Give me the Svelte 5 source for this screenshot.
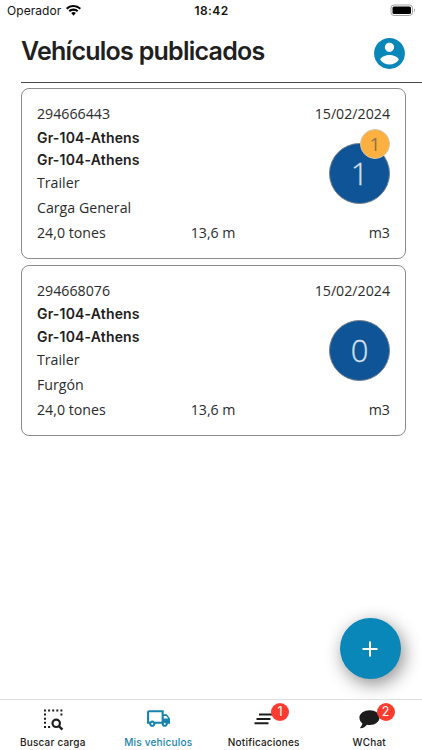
<script>
  const vehicles = [
    { id: '294666443', date: '15/02/2024', from: 'Gr-104-Athens', to: 'Gr-104-Athens', type: 'Trailer', load: 'Carga General', weight: '24,0 tones', length: '13,6 m', volume: 'm3', matches: 1, fresh: 1 },
    { id: '294668076', date: '15/02/2024', from: 'Gr-104-Athens', to: 'Gr-104-Athens', type: 'Trailer', load: 'Furgón', weight: '24,0 tones', length: '13,6 m', volume: 'm3', matches: 0, fresh: 0 }
  ];
</script>

<div class="screen">
  <div class="status">
    <div class="carrier">
      <span>Operador</span>
      <svg width="15" height="11" viewBox="0 0 15 11">
        <path d="M7.5 0C4.6 0 2 1.1 0 3l1.4 1.5A8.8 8.8 0 0 1 7.5 2.1c2.4 0 4.5.9 6.1 2.4L15 3A10.9 10.9 0 0 0 7.5 0z" />
        <path d="M7.5 3.500c-1.900 0-3.600.7-4.900 1.900L4 7.100a5.100 5.100 0 0 1 7 0l1.400-1.700a7.200 7.200 0 0 0-4.900-1.900z" />
        <path d="M7.5 7.100c-.9 0-1.700.3-2.300.9l2.300 2.700 2.300-2.700c-.6-.6-1.400-.9-2.300-.9z" />
      </svg>
    </div>
    <span class="clock">18:42</span>
    <svg class="battery" width="26" height="13" viewBox="0 0 26 13">
      <rect x="1" y="1" width="21.500" height="10.500" rx="3" fill="none" stroke="#a3a3a3" />
      <rect x="2.500" y="2.500" width="18.500" height="7.500" rx="1.500" />
      <path d="M24 4.500c1.200.5 1.200 3 0 3.500z" fill="#a3a3a3" />
    </svg>
  </div>

  <header>
    <h1>Vehículos publicados</h1>
    <svg class="avatar" width="37" height="37" viewBox="0 0 24 24">
      <path fill="#0a87b9" d="M12 2C6.480 2 2 6.480 2 12s4.480 10 10 10 10-4.480 10-10S17.520 2 12 2zm0 3c1.660 0 3 1.340 3 3s-1.340 3-3 3-3-1.340-3-3 1.340-3 3-3zm0 14.200c-2.500 0-4.710-1.280-6-3.220.03-1.990 4-3.080 6-3.080 1.990 0 5.970 1.090 6 3.080-1.290 1.940-3.500 3.220-6 3.220z" />
    </svg>
  </header>

  <main>
    {#each vehicles as v}
      <article>
        <div class="row"><span>{v.id}</span><span>{v.date}</span></div>
        <div class="place">{v.from}</div>
        <div class="place">{v.to}</div>
        <div class="row">{v.type}</div>
        <div class="row">{v.load}</div>
        <div class="row specs"><span>{v.weight}</span><span>{v.length}</span><span>{v.volume}</span></div>
        <div class="count">
          {v.matches}
          {#if v.fresh}<span class="fresh">{v.fresh}</span>{/if}
        </div>
      </article>
    {/each}
  </main>

  <button class="add" aria-label="Añadir">
    <svg width="16" height="16" viewBox="0 0 16 16"><path d="M8 .5v15M.5 8h15" stroke="#fff" stroke-width="2" /></svg>
  </button>

  <nav>
    <div class="tab search">
      <svg width="21" height="22" viewBox="0 0 21 22">
        <g fill="none" stroke="#1c1c1c" stroke-width="2">
          <path d="M1 1.500h19" stroke-dasharray="2 2.100" />
          <path d="M1 5.600h2M1 9.700h2M1 13.800h2M1 17.900h2M5.100 17.900h2M17.400 5.600h2" />
          <circle cx="13.200" cy="14.300" r="3.700" stroke-width="2.200" />
          <path d="M15.800 17l3.600 3.600" stroke-width="2.400" />
        </g>
      </svg>
      <span class="label">Buscar carga</span>
    </div>
    <div class="tab truck">
      <svg width="25" height="25" viewBox="0 0 24 24">
        <path fill="#1583ad" d="M20 8h-3V4H3c-1.100 0-2 .9-2 2v11h2c0 1.660 1.340 3 3 3s3-1.340 3-3h6c0 1.660 1.340 3 3 3s3-1.340 3-3h2v-5l-3-4zm-.5 1.500l1.960 2.500H17V9.500h2.500zM6 18c-.55 0-1-.45-1-1s.45-1 1-1 1 .45 1 1-.45 1-1 1zm2.220-3c-.55-.61-1.330-1-2.220-1s-1.670.39-2.220 1H3V6h12v9H8.220zM18 18c-.55 0-1-.45-1-1s.45-1 1-1 1 .45 1 1-.45 1-1 1z" />
      </svg>
      <span class="label">Mis vehiculos</span>
    </div>
    <div class="tab notices">
      <svg width="20" height="12" viewBox="0 0 20 12">
        <path d="M5 1.500h14M2.500 6h14M.5 10.300h14" stroke="#1c1c1c" stroke-width="2.100" />
      </svg>
      <i class="badge">1</i>
      <span class="label">Notificaciones</span>
    </div>
    <div class="tab chat">
      <svg width="21" height="19" viewBox="0 0 21 19">
        <path fill="#1c1c1c" d="M10.800.3c5.400 0 9.700 3.100 9.700 7.300s-4.300 7.500-9.700 7.500c-1 0-2-.1-2.900-.3-1.500 2-3.700 3.300-6.200 3.500-.5 0-.8-.5-.4-.9 1.100-1 1.900-2.300 2.100-3.800C1.700 12.200.4 10 .4 7.600.4 3.400 5.200.3 10.800.3z" />
      </svg>
      <i class="badge">2</i>
      <span class="label">WChat</span>
    </div>
  </nav>
</div>

<style>
  :global(body) { background: #fff; }
  .screen {
    position: relative;
    box-sizing: border-box;
    width: 422px;
    height: 750px;
    overflow: hidden;
    display: flex;
    flex-direction: column;
    background: #fff;
    color: #2b2b2b;
    font-family: "Open Sans", sans-serif;
  }
  .status {
    height: 22px;
    flex: none;
    display: grid;
    grid-template-columns: 1fr auto 1fr;
    align-items: center;
    padding: 0 6px 0 7px;
    color: #111;
    font: 12px/22px Inter, sans-serif;
  }
  .carrier { display: flex; align-items: center; gap: 5px; letter-spacing: 0.060px; }
  .carrier svg { margin-top: -1px; }
  .clock { font-weight: 600; letter-spacing: 0.400px; }
  .battery { justify-self: end; margin-top: -1px; }
  header {
    flex: none;
    box-sizing: border-box;
    height: 61px;
    margin-left: 21px;
    padding: 0 14.500px 0 0;
    border-bottom: 1px solid #4a4a4c;
    display: flex;
    justify-content: space-between;
    align-items: center;
  }
  h1 {
    margin: -2px 0 0;
    font: 600 25px/34px Inter, sans-serif;
    letter-spacing: -0.740px;
    color: #202020;
  }
  .avatar { margin-top: 3px; }
  main { flex: 1; padding: 5px 16px 0 21px; }
  article {
    position: relative;
    box-sizing: border-box;
    height: 171px;
    margin-bottom: 5.500px;
    padding: 13px 15px 0;
    border: 1px solid #8b8b8b;
    border-radius: 8px;
    font-size: 14.200px;
  }
  .row { display: flex; justify-content: space-between; height: 24.900px; line-height: 24.900px; }
  .specs { display: grid; grid-template-columns: 1fr 1fr 1fr; }
  .specs span:nth-child(2) { padding-left: 36px; }
  .specs span:last-child { text-align: right; }
  .place { height: 22.300px; font: 600 14px/22.300px Inter, sans-serif; letter-spacing: 0.170px; color: #202020; }
  .count {
    position: absolute;
    right: 15px;
    top: 54px;
    box-sizing: border-box;
    width: 61px;
    height: 61px;
    border: 1px solid #75818e;
    border-radius: 50%;
    background: #0e5496;
    color: #d5e1ed;
    font: 300 31px/58px "Open Sans", sans-serif;
    -webkit-text-stroke: 0.300px #d5e1ed;
    text-align: center;
  }
  .fresh {
    position: absolute;
    right: -1px;
    top: -15px;
    box-sizing: border-box;
    width: 30px;
    height: 30px;
    border: 1px solid #d3c6ae;
    border-radius: 50%;
    background: #fbb040;
    color: #8c7348;
    font-size: 19px;
    font-weight: 400;
    -webkit-text-stroke: 0;
    line-height: 28px;
  }
  .add {
    position: absolute;
    left: 340px;
    top: 618px;
    width: 61px;
    height: 61px;
    padding: 0;
    border: 0;
    border-radius: 50%;
    background: #0a87b9;
    box-shadow: 3px 5px 18px rgba(0, 0, 0, 0.450);
    display: flex;
    align-items: center;
    justify-content: center;
  }
  .add svg { margin: 1px 1px 0 0; }
  nav {
    flex: none;
    box-sizing: border-box;
    height: 51px;
    border-top: 1px solid #dedede;
    background: #fff;
    display: grid;
    grid-template-columns: repeat(4, 1fr);
    position: relative;
  }
  .tab {
    position: relative;
    display: flex;
    flex-direction: column;
    align-items: center;
    justify-content: space-between;
    padding-bottom: 1px;
  }
  .tab svg { display: block; }
  .search svg { margin: 9px 0 0 1px; }
  .truck svg { margin-top: 6px; }
  .notices svg { margin-top: 13px; }
  .chat svg { margin-top: 10px; }
  .label { font: 500 10px/14px Inter, sans-serif; letter-spacing: 0.200px; color: #202020; }
  .truck .label { color: #1583ad; }
  .badge {
    position: absolute;
    left: 60px;
    top: 3px;
    width: 18px;
    height: 18px;
    border-radius: 50%;
    background: #ff3b30;
    color: #fff;
    font: 400 12.500px/18px Inter, sans-serif;
    text-align: center;
  }
</style>
